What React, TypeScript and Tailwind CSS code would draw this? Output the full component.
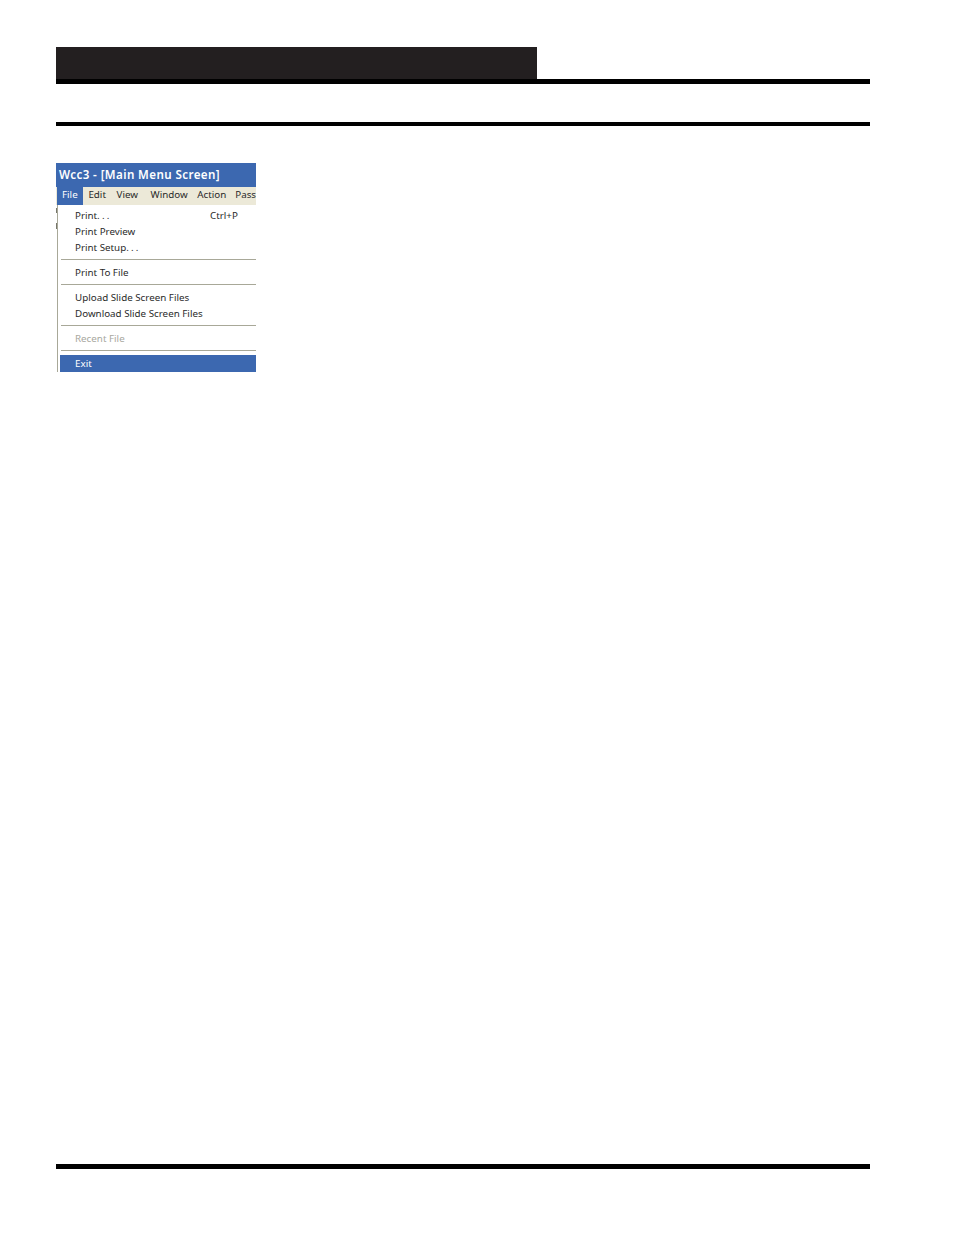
const menuFont = "font-['Noto_Sans',sans-serif] text-[9.8px] leading-[16px]";

function MenuRow({ label, dots, shortcut, className = 'text-[#2a2a2a]' }: { label: string; dots?: boolean; shortcut?: string; className?: string }) {
  return (
    <div className={`flex h-[16px] items-center pt-[1px] pl-[17px] ${menuFont} ${className}`}>
      <span className="w-[135px] whitespace-nowrap">
        {label}
        {dots && <span className="tracking-[2.2px]">...</span>}
      </span>
      {shortcut && <span>{shortcut}</span>}
    </div>
  );
}

function Separator() {
  return <div className="my-[4px] ml-[3px] h-px bg-[#a8a898]" />;
}

function Screenshot() {
  return (
    <div className="w-[200px]">
      <div className="flex h-[24px] items-center bg-[#3c68b0] pl-[3px] font-['Noto_Sans',sans-serif] text-[11.6px] font-semibold tracking-[0.4px] whitespace-nowrap text-white">
        Wcc3 - [Main Menu Screen]
      </div>
      <div className={`flex h-[18px] overflow-hidden bg-[#ece9d8] ${menuFont} text-[#2a2a2a]`}>
        <div className="ml-px flex w-[27px] items-center bg-[#3c68b0] pb-[2px] pl-[5px] text-white">File</div>
        <span className="ml-[5px] w-[29px]">Edit</span>
        <span className="w-[35px]">View</span>
        <span className="w-[48px]">Window</span>
        <span className="w-[39px]">Action</span>
        <span className="whitespace-nowrap">Pass</span>
      </div>
      <div className="relative ml-px border-l border-[#a8a898] pt-[2px]">
        <div className="absolute top-[3px] -left-[2px] h-[5px] w-px bg-[#77776c]" />
        <div className="absolute top-[18px] -left-[2px] h-[6px] w-px bg-[#77776c]" />
        <MenuRow label="Print" dots shortcut="Ctrl+P" />
        <MenuRow label="Print Preview" />
        <MenuRow label="Print Setup" dots />
        <Separator />
        <MenuRow label="Print To File" />
        <Separator />
        <MenuRow label="Upload Slide Screen Files" />
        <MenuRow label="Download Slide Screen Files" />
        <Separator />
        <MenuRow label="Recent File" className="text-[#a8a8a0]" />
        <Separator />
        <div className={`ml-[2px] flex h-[17px] items-center bg-[#3c68b0] pl-[15px] ${menuFont} text-white`}>Exit</div>
      </div>
    </div>
  );
}

export default function App() {
  return (
    <div className="h-[1235px] w-[954px] bg-white pt-[47px] pl-[56px]">
      <div className="flex h-[1122px] w-[814px] flex-col">
        <div className="h-[32px] w-[481px] bg-[#231f20]" />
        <div className="h-[5px] bg-black" />
        <div className="mt-[38px] h-[4px] bg-black" />
        <div className="mt-[37px]">
          <Screenshot />
        </div>
        <div className="mt-auto h-[5px] bg-black" />
      </div>
    </div>
  );
}
